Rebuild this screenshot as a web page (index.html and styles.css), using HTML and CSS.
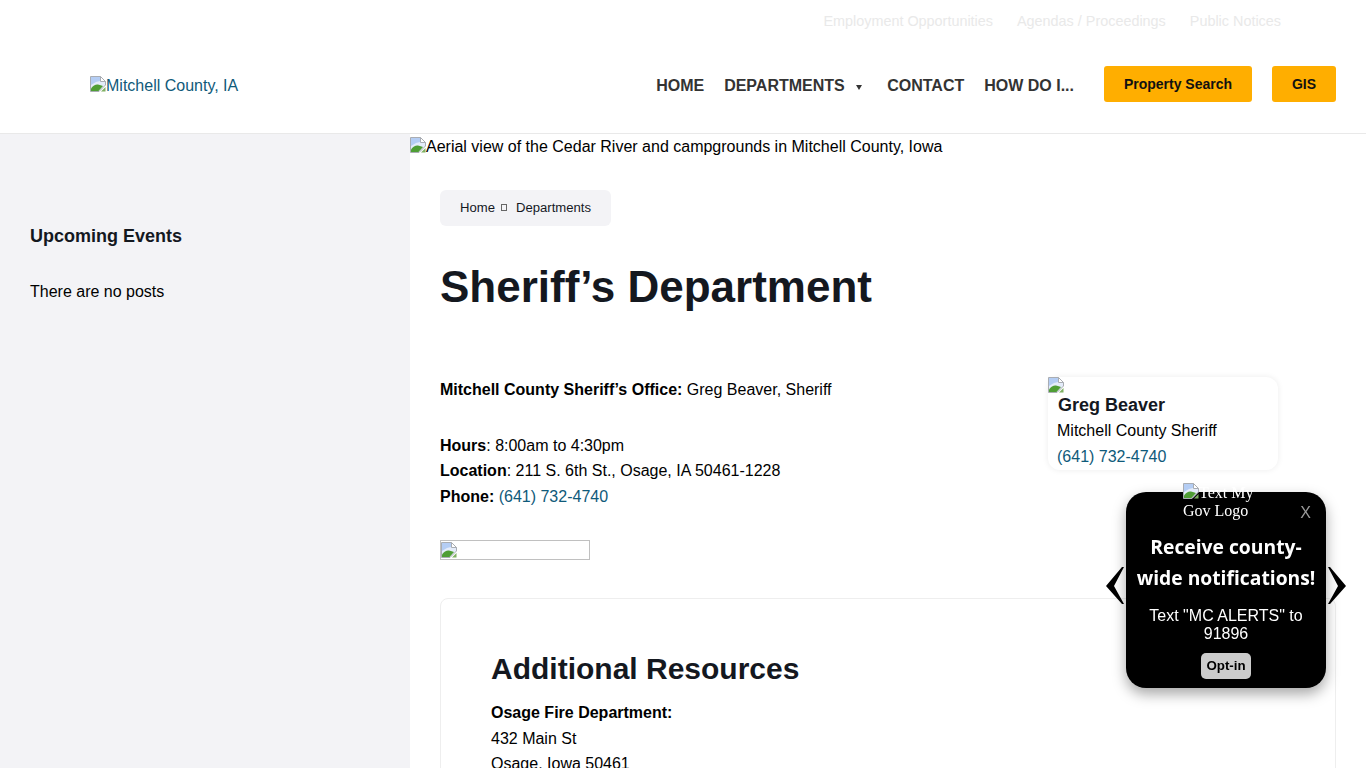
FILE: index.html
```html
<!DOCTYPE html>
<html lang="en">

<head>
    <meta charset="UTF-8" />
    <meta name="viewport" content="width=device-width, initial-scale=1.0" />
    <title>Sheriff's Department - Mitchell County, IA</title>
    <link rel="stylesheet" href="styles.css">
</head>

<body>
    <svg class="defs" width="0" height="0" aria-hidden="true">
        <symbol id="broken" viewBox="0 0 16 16">
            <path d="M0.5 0.5H10.5L15.5 5.5V9L9 15.5H0.5Z" fill="#e4ecfa" stroke="#a9adb3" />
            <path d="M1 1H10V5L6 6L1 9Z" fill="#b4cdf4" />
            <path d="M10.5 0.5V5.5H15.5Z" fill="#fff" stroke="#a9adb3" />
            <path d="M1 15V12.5C3 9.5 6 8 8 8.5C10 9 11.5 9.5 13 10L8.5 15Z" fill="#4f9e35" />
            <path d="M11 15.5L15.5 11V15.5Z" fill="#7fb062" />
        </symbol>
    </svg>

    <header class="site-header">
        <div class="topbar">
            <a href="#">Employment Opportunities</a>
            <a href="#">Agendas / Proceedings</a>
            <a href="#">Public Notices</a>
        </div>
        <div class="navbar">
            <a class="logo" href="#"><svg class="broken"><use href="#broken" /></svg>Mitchell County, IA</a>
            <nav class="nav">
                <a href="#">HOME</a>
                <a href="#" class="has-sub">DEPARTMENTS <span class="caret"></span></a>
                <a href="#">CONTACT</a>
                <a href="#">HOW DO I...</a>
                <a href="#" class="btn btn-wide">Property Search</a>
                <a href="#" class="btn">GIS</a>
            </nav>
        </div>
    </header>

    <div class="layout">
        <aside class="sidebar">
            <h3>Upcoming Events</h3>
            <p>There are no posts</p>
        </aside>

        <main class="content">
            <div class="hero"><svg class="broken"><use href="#broken" /></svg>Aerial view of the Cedar River and campgrounds in Mitchell County, Iowa</div>

            <div class="inner">
                <div class="breadcrumb">
                    <a href="#">Home</a>
                    <span class="sep"></span>
                    <a href="#">Departments</a>
                </div>

                <h1>Sheriff’s Department</h1>

                <div class="intro">
                    <div class="intro-text">
                        <p><b>Mitchell County Sheriff’s Office:</b> Greg Beaver, Sheriff</p>
                        <p>
                            <b>Hours</b>: 8:00am to 4:30pm<br>
                            <b>Location</b>: 211 S. 6th St., Osage, IA 50461-1228<br>
                            <b>Phone:</b> <a href="#">(641) 732-4740</a>
                        </p>
                        <div class="img-box"><svg class="broken"><use href="#broken" /></svg></div>
                    </div>
                    <div class="person">
                        <svg class="broken"><use href="#broken" /></svg>
                        <h4>Greg Beaver</h4>
                        <p>Mitchell County Sheriff</p>
                        <a href="#">(641) 732-4740</a>
                    </div>
                </div>

                <section class="resources">
                    <h2>Additional Resources</h2>
                    <p><b>Osage Fire Department:</b><br>432 Main St<br>Osage, Iowa 50461</p>
                </section>
            </div>
        </main>
    </div>

    <div class="alert">
        <svg class="arrow arrow-left" viewBox="0 0 18 37"><polygon points="18,0 16,0 0,19 16,37 18,37 8,19" /></svg>
        <svg class="arrow arrow-right" viewBox="0 0 18 37"><polygon points="0,0 2,0 18,19 2,37 0,37 10,19" /></svg>
        <div class="alert-logo"><svg class="broken"><use href="#broken" /></svg>Text My Gov Logo</div>
        <span class="alert-close">X</span>
        <div class="alert-title">Receive county-wide notifications!</div>
        <div class="alert-text">Text "MC ALERTS" to 91896</div>
        <a href="#" class="alert-btn">Opt-in</a>
    </div>
</body>

</html>
```

FILE: styles.css
```css
html,
body {
    height: 100%;
    overflow: hidden;
}

body {
    margin: 0;
    font-family: "Liberation Sans", Arial, sans-serif;
    font-size: 16px;
    line-height: 25.6px;
    color: #000;
    background-color: #ffffff;
}

a {
    color: #0f5a7a;
    text-decoration: none;
}

p {
    margin: 0;
}

.defs {
    display: block;
}

.broken {
    display: inline-block;
    width: 16px;
    height: 16px;
    vertical-align: -1px;
}

.site-header {
    border-bottom: 1px solid #e9e9e9;
}

.topbar {
    display: flex;
    justify-content: flex-end;
    gap: 24px;
    height: 42px;
    padding-right: 85px;
    font-size: 14.4px;
    line-height: 42px;
}

.topbar a {
    color: #e9e9e9;
}

.navbar {
    display: flex;
    align-items: center;
    justify-content: space-between;
    height: 91px;
    padding: 0 30px 0 90px;
}

.logo {
    margin-top: -4px;
}

.nav {
    display: flex;
    align-items: center;
    margin-top: -7px;
}

.nav a {
    margin-top: 4px;
    margin-right: 20px;
    color: #333333;
    font-weight: bold;
}

.nav .has-sub {
    margin-right: 25px;
}

.nav a:nth-child(4) {
    margin-right: 30px;
}

.caret {
    display: inline-block;
    width: 0;
    height: 0;
    margin-left: 7px;
    vertical-align: 1px;
    border-top: 5px solid #333333;
    border-left: 3px solid transparent;
    border-right: 3px solid transparent;
}

.nav .btn {
    width: 64px;
    height: 36px;
    margin-top: 0;
    margin-right: 0;
    border-radius: 3px;
    background-color: #ffae00;
    color: #111111;
    font-size: 14px;
    line-height: 36px;
    text-align: center;
}

.nav .btn-wide {
    width: 148px;
    margin-right: 20px;
}

.layout {
    display: flex;
    min-height: 900px;
}

.sidebar {
    flex: 0 0 410px;
    box-sizing: border-box;
    padding: 90px 30px 0;
    background-color: #f3f3f6;
}

.sidebar h3 {
    margin: 0 0 31px;
    font-size: 18px;
    line-height: 24px;
    color: #14181f;
}

.content {
    flex: 1;
    min-width: 0;
}

.hero {
    height: 56px;
    line-height: 25px;
}

.inner {
    padding: 0 30px;
}

.breadcrumb {
    display: inline-flex;
    align-items: center;
    height: 36px;
    padding: 0 20px;
    border-radius: 6px;
    background-color: #f3f3f6;
    font-size: 13.12px;
}

.breadcrumb a {
    color: #14181f;
}

.sep {
    width: 4px;
    height: 5px;
    margin: -2px 9px 0 6px;
    border: 1px solid #666666;
}

h1 {
    margin: 33px 0 62px;
    font-size: 44px;
    line-height: 56px;
    color: #14181f;
}

.intro {
    display: flex;
    justify-content: space-between;
    height: 221px;
    padding-right: 58px;
}

.intro-text p {
    margin-bottom: 30px;
}

.img-box {
    box-sizing: border-box;
    width: 150px;
    height: 20px;
    border: 1px solid #c0c0c0;
    line-height: 16px;
    margin-top: 30.4px;
}

.img-box .broken {
    vertical-align: top;
    margin-top: 1px;
}

.person {
    box-sizing: border-box;
    width: 230px;
    height: 93px;
    padding-left: 9px;
    border-radius: 12px;
    box-shadow: 0 0 6px rgba(0, 0, 0, 0.08);
}

.person .broken {
    display: block;
    margin-left: -9px;
}

.person h4 {
    margin: 0 0 1px 1px;
    font-size: 18px;
    line-height: 24px;
    color: #14181f;
}

.resources {
    box-sizing: border-box;
    height: 400px;
    padding: 50px;
    border: 1px solid #eeeeee;
    border-radius: 8px;
}

.resources h2 {
    margin: 0 0 11px;
    font-size: 30px;
    line-height: 40px;
    color: #14181f;
}

.alert {
    position: fixed;
    left: 1126px;
    top: 492px;
    box-sizing: border-box;
    width: 200px;
    height: 196px;
    border-radius: 20px;
    background-color: #000000;
    box-shadow: 0 6px 14px rgba(0, 0, 0, 0.35);
    color: #ffffff;
    text-align: center;
}

.alert-logo {
    position: absolute;
    left: 57px;
    top: -9px;
    width: 90px;
    font-family: "Liberation Serif", serif;
    font-size: 16px;
    line-height: 18px;
    text-align: left;
}

.alert-close {
    position: absolute;
    right: 15px;
    top: 8px;
    color: #999999;
    font-size: 16px;
}

.alert-title {
    padding: 39px 8px 0;
    font-family: "Open Sans", sans-serif;
    font-size: 19.3px;
    font-weight: bold;
    line-height: 31px;
}

.alert-text {
    margin-top: 14px;
    padding: 0 8px;
    line-height: 18px;
}

.alert-btn {
    display: block;
    width: 50px;
    height: 26px;
    margin: 10px auto 0;
    border-radius: 5px;
    background-color: #cccccc;
    color: #000000;
    font-size: 13.33px;
    font-weight: bold;
    line-height: 26px;
}

.arrow {
    position: absolute;
    top: 75px;
    width: 18px;
    height: 37px;
    fill: #000000;
}

.arrow-left {
    left: -20px;
}

.arrow-right {
    right: -20px;
}
```
